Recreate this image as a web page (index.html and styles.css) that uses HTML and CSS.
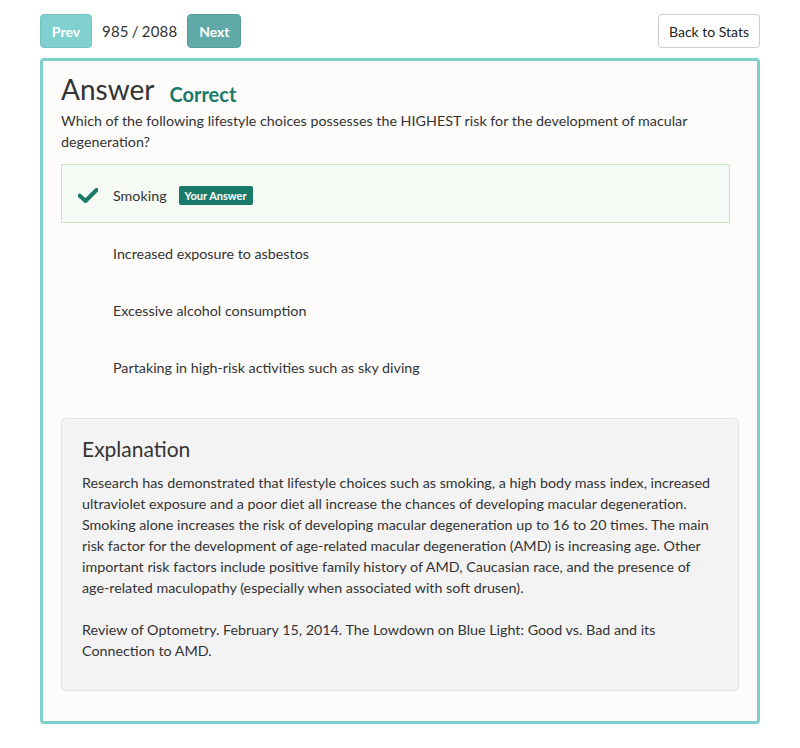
FILE: index.html
```html
<!DOCTYPE html>
<html>
<head>
<meta charset="utf-8">
<link rel="stylesheet" href="styles.css">
</head>
<body>
<div class="page">
  <div class="toolbar">
    <div class="nav">
      <button class="btn btn-prev">Prev</button>
      <span class="counter">985 / 2088</span>
      <button class="btn btn-next">Next</button>
    </div>
    <button class="btn btn-back">Back to Stats</button>
  </div>
  <div class="card">
    <div class="title-row">
      <h1 class="title">Answer</h1>
      <span class="status">Correct</span>
    </div>
    <p class="question">Which of the following lifestyle choices possesses the HIGHEST risk for the development of macular degeneration?</p>
    <ul class="options">
      <li class="option selected">
        <span class="icon"><svg width="20" height="15" viewBox="0 0 20 15"><path d="M1.5 7.5 L7.5 13 L18.5 2" fill="none" stroke="#1a7a6a" stroke-width="4" stroke-linecap="round" stroke-linejoin="round"/></svg></span>
        <span class="opt-text">Smoking</span>
        <span class="badge">Your Answer</span>
      </li>
      <li class="option"><span class="icon"></span><span class="opt-text">Increased exposure to asbestos</span></li>
      <li class="option"><span class="icon"></span><span class="opt-text">Excessive alcohol consumption</span></li>
      <li class="option"><span class="icon"></span><span class="opt-text">Partaking in high-risk activities such as sky diving</span></li>
    </ul>
    <div class="explanation">
      <h2 class="exp-title">Explanation</h2>
      <p>Research has demonstrated that lifestyle choices such as smoking, a high body mass index, increased ultraviolet exposure and a poor diet all increase the chances of developing macular degeneration. Smoking alone increases the risk of developing macular degeneration up to 16 to 20 times. The main risk factor for the development of age-related macular degeneration (AMD) is increasing age. Other important risk factors include positive family history of AMD, Caucasian race, and the presence of age-related maculopathy (especially when associated with soft drusen).</p>
      <p>Review of Optometry. February 15, 2014. The Lowdown on Blue Light: Good vs. Bad and its Connection to AMD.</p>
    </div>
  </div>
</div>
</body>
</html>
```

FILE: styles.css
```css
* { box-sizing: border-box; }
html, body { margin: 0; padding: 0; background: #fff; }
body {
  font-family: Lato, "Open Sans", sans-serif;
  color: #333;
  font-size: 14.3px;
  line-height: 21px;
}
.page {
  padding: 14px 40px 0 40px;
}
.toolbar {
  display: flex;
  justify-content: space-between;
  align-items: center;
  height: 34px;
}
.nav {
  display: flex;
  align-items: center;
}
.btn {
  font-family: Lato, "Open Sans", sans-serif;
  height: 34px;
  border-radius: 4px;
  font-size: 14px;
  padding: 0 12px;
  cursor: pointer;
}
.btn-prev {
  background: #80d0cf;
  border: 1px solid #74c3c2;
  color: #fff;
  font-weight: bold;
  width: 52px;
  padding: 0;
}
.btn-next {
  background: #5fa9a6;
  border: 1px solid #579e9b;
  color: #fff;
  font-weight: bold;
  width: 54px;
  padding: 0;
}
.counter {
  font-size: 15px;
  color: #333;
  margin: 0 10px;
  word-spacing: -1px;
  letter-spacing: 0.2px;
}
.btn-back {
  background: #fff;
  border: 1px solid #ccc;
  color: #222;
  width: 102px;
  padding: 0;
}
.card {
  margin-top: 10px;
  border: 3px solid #7dcfcc;
  border-radius: 4px;
  background: #fdfcfb;
  padding: 10px 18px 30px 18px;
  height: 666px;
}
.title-row {
  display: flex;
  align-items: baseline;
}
.title {
  font-size: 28px;
  font-weight: normal;
  margin: 0;
  line-height: 36px;
  color: #333;
}
.status {
  font-size: 20px;
  font-weight: bold;
  color: #187a68;
  margin-left: 15px;
  position: relative;
  top: 2px;
}
.question {
  margin: 3px 0 0 0;
  width: 660px;
}
.options {
  list-style: none;
  margin: 12px 0 0 0;
  padding: 0;
  width: 669px;
}
.option {
  display: flex;
  align-items: center;
  height: 57px;
  padding-left: 17px;
  padding-top: 4px;
  color: #333;
}
.option.selected {
  height: 59px;
  border: 1px solid #c7e6c1;
  background: #f5faf4;
  padding-left: 16px;
  padding-top: 3px;
}
.icon {
  width: 35px;
  display: inline-flex;
  align-items: center;
}
.icon svg { display: block; }
.badge {
  background: #1a7a6a;
  color: #fff;
  font-size: 11px;
  font-weight: bold;
  border-radius: 2px;
  padding: 0 6px;
  line-height: 19px;
  margin-left: 12px;
}
.explanation {
  margin-top: 24px;
  background: #f3f3f3;
  border: 1px solid #e2e2e2;
  border-radius: 4px;
  padding: 16px 20px 29px 20px;
}
.exp-title {
  font-size: 21px;
  font-weight: normal;
  margin: 0 0 9px 0;
  line-height: 28px;
  color: #333;
}
.explanation p {
  margin: 0 0 21px 0;
}
.explanation p:last-child { margin-bottom: 0; }
```
